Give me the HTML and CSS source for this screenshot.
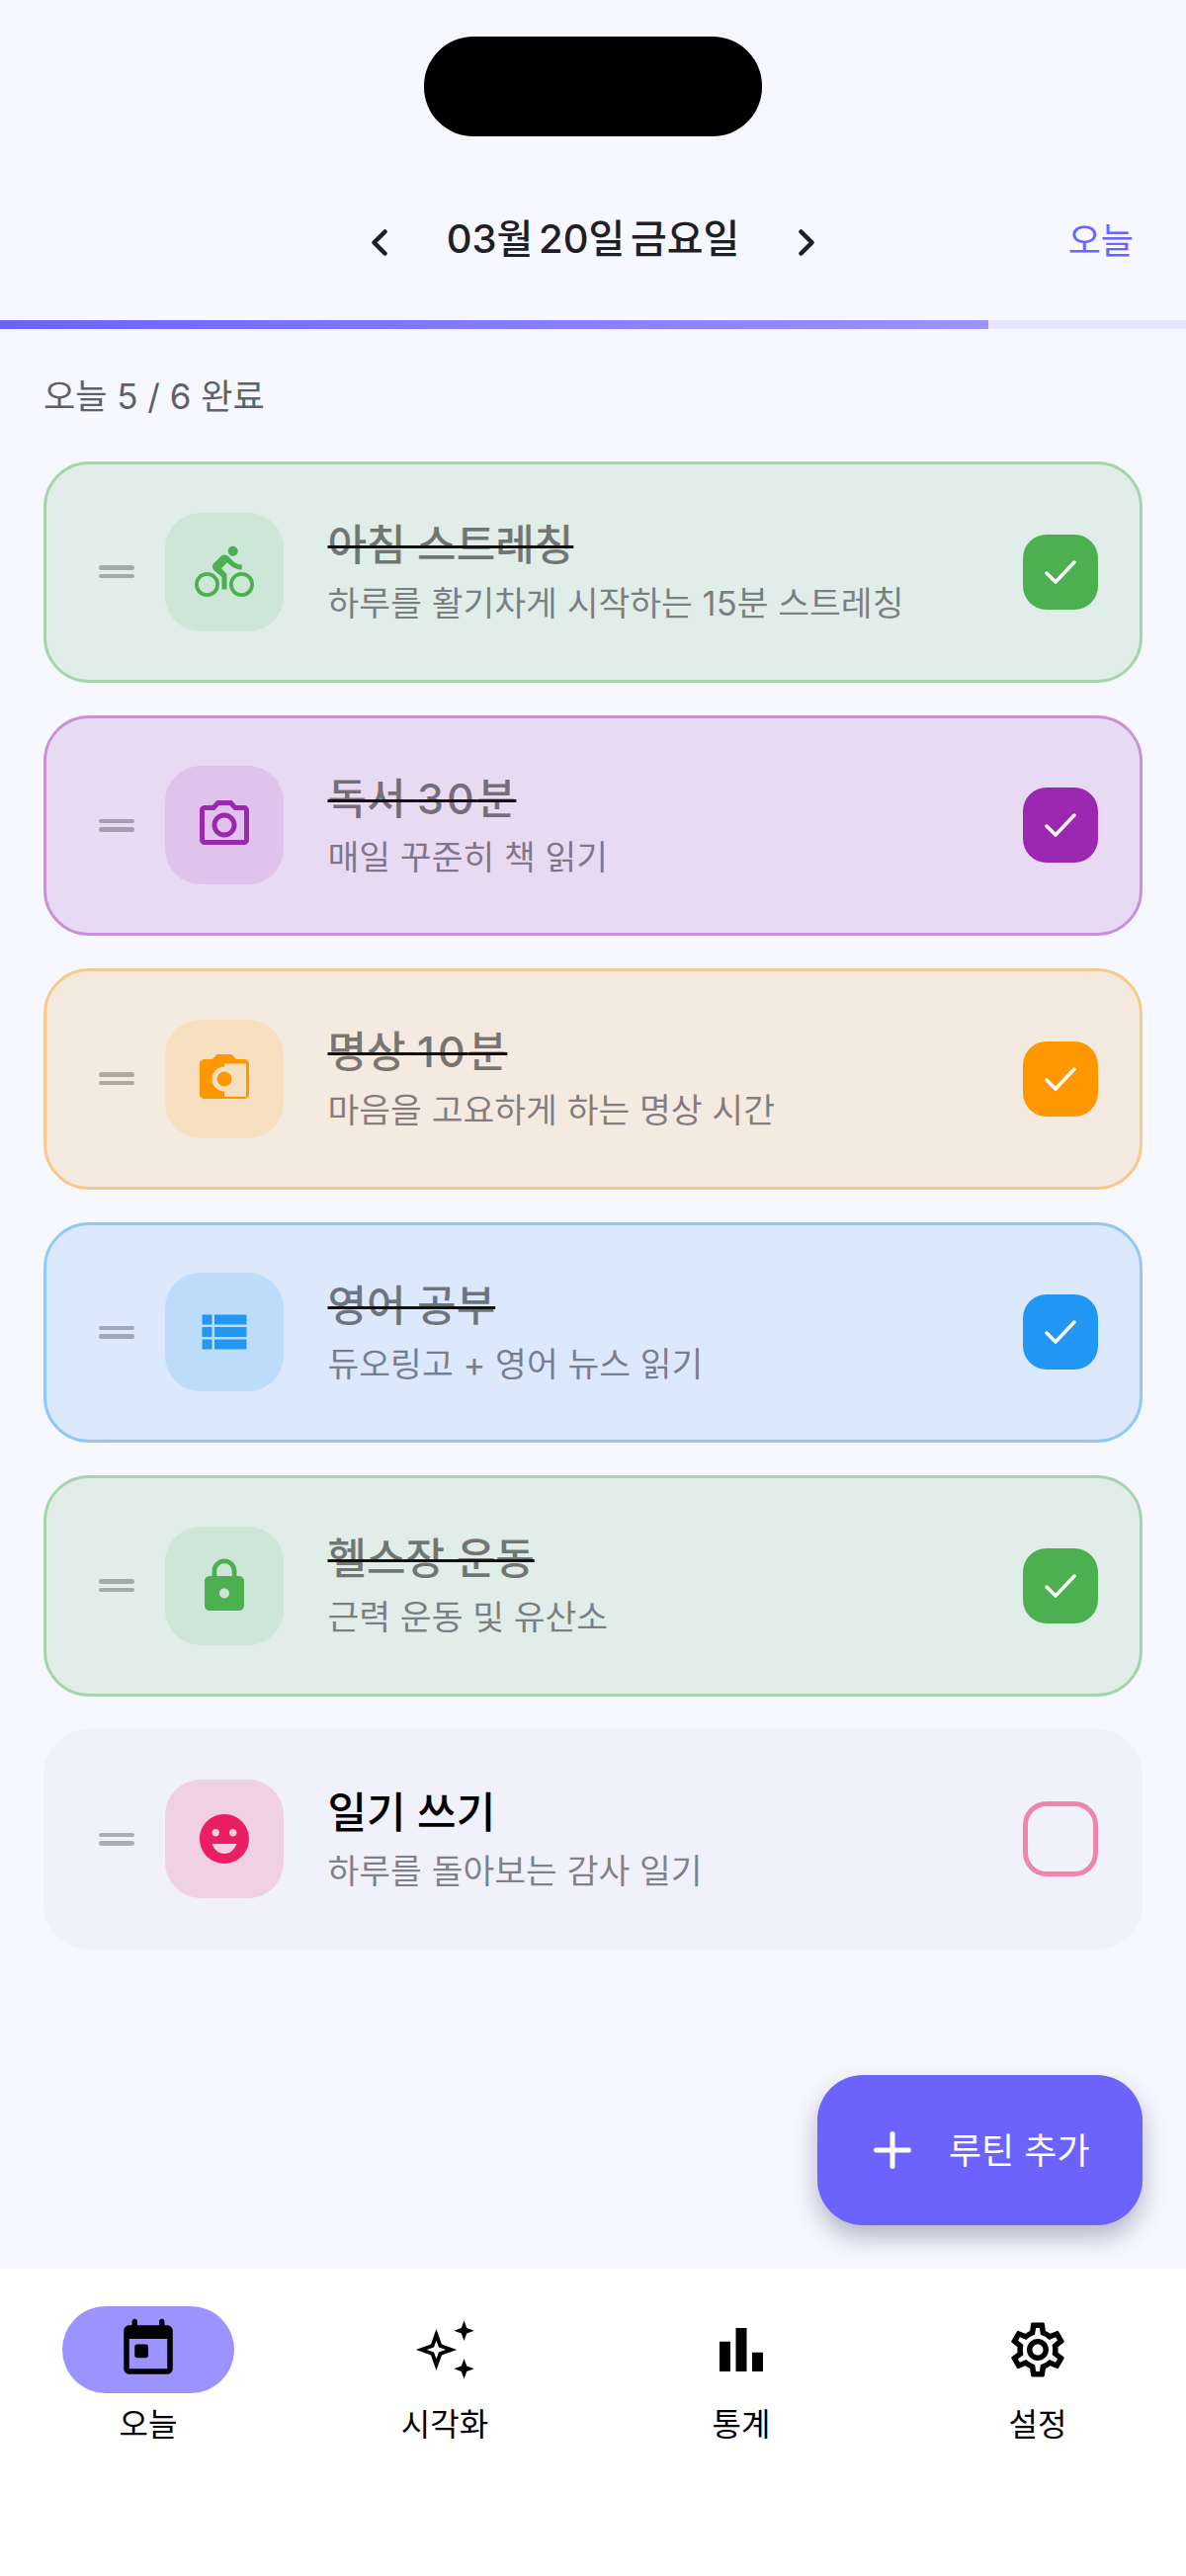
FILE: index.html
```html
<!DOCTYPE html>
<html lang="ko">
<head>
    <meta charset="UTF-8">
    <meta name="viewport" content="width=device-width, initial-scale=1.0">
    <title>오늘 루틴</title>
    <link rel="stylesheet" href="styles.css">
</head>
<body>
    <div class="screen">
        <div class="notch-area"><div class="notch"></div></div>

        <header class="header">
            <div class="date-nav">
                <svg class="chevron" viewBox="0 0 16 27"><path d="M13.5 2.5l-11 11 11 11"/></svg>
                <span class="date">03월 20일 금요일</span>
                <svg class="chevron" viewBox="0 0 16 27"><path d="M2.5 2.5l11 11-11 11"/></svg>
            </div>
            <span class="today-link">오늘</span>
        </header>

        <div class="progress"><div class="progress-fill"></div></div>

        <main class="content">
            <p class="count">오늘 5 / 6 완료</p>

            <div class="card card-green done">
                <div class="handle"><i></i><i></i></div>
                <div class="icon-box">
                    <svg class="icon" viewBox="0 0 24 24"><path d="M15.5 5.5c1.1 0 2-.9 2-2s-.9-2-2-2-2 .9-2 2 .9 2 2 2zM5 12c-2.8 0-5 2.2-5 5s2.2 5 5 5 5-2.2 5-5-2.2-5-5-5zm0 8.5c-1.9 0-3.5-1.6-3.5-3.5s1.6-3.5 3.5-3.5 3.5 1.6 3.5 3.5-1.6 3.5-3.5 3.5zm5.8-10l2.4-2.4.8.8c1.3 1.3 3 2.1 5.1 2.1V9c-1.5 0-2.7-.6-3.6-1.5l-1.9-1.9c-.5-.4-1-.6-1.6-.6s-1.1.2-1.4.6L7.8 8.4c-.4.4-.6.9-.6 1.4 0 .6.2 1.1.6 1.4L11 14v5h2v-6.2l-2.2-2.3zM19 12c-2.8 0-5 2.2-5 5s2.2 5 5 5 5-2.2 5-5-2.2-5-5-5zm0 8.5c-1.9 0-3.5-1.6-3.5-3.5s1.6-3.5 3.5-3.5 3.5 1.6 3.5 3.5-1.6 3.5-3.5 3.5z"/></svg>
                </div>
                <div class="card-text">
                    <div class="card-title">아침 스트레칭</div>
                    <div class="card-sub">하루를 활기차게 시작하는 15분 스트레칭</div>
                </div>
                <div class="check"><svg viewBox="0 0 32 24"><path d="M2 13l9 9L30 2"/></svg></div>
            </div>

            <div class="card card-purple done">
                <div class="handle"><i></i><i></i></div>
                <div class="icon-box">
                    <svg class="icon" viewBox="0 0 24 24"><path d="M14.12 4l1.83 2H20v12H4V6h4.05l1.83-2h4.24M15 2H9L7.17 4H4c-1.1 0-2 .9-2 2v12c0 1.1.9 2 2 2h16c1.1 0 2-.9 2-2V6c0-1.1-.9-2-2-2h-3.17L15 2zm-3 7c1.65 0 3 1.35 3 3s-1.35 3-3 3-3-1.35-3-3 1.35-3 3-3m0-2c-2.76 0-5 2.24-5 5s2.24 5 5 5 5-2.24 5-5-2.24-5-5-5z"/></svg>
                </div>
                <div class="card-text">
                    <div class="card-title">독서 <span class="num">30</span>분</div>
                    <div class="card-sub">매일 꾸준히 책 읽기</div>
                </div>
                <div class="check"><svg viewBox="0 0 32 24"><path d="M2 13l9 9L30 2"/></svg></div>
            </div>

            <div class="card card-orange done">
                <div class="handle"><i></i><i></i></div>
                <div class="icon-box">
                    <svg class="icon" viewBox="0 0 24 24"><path d="M20 4h-3.17L15 2H9L7.17 4H4c-1.1 0-2 .9-2 2v12c0 1.1.9 2 2 2h16c1.1 0 2-.9 2-2V6c0-1.1-.9-2-2-2z"/><path class="icon-cut" d="M12 5.8H20.8V19.1H12V15A3 3 0 0 0 12 9ZM12 7A5 5 0 0 0 12 17V15A3 3 0 0 1 12 9Z"/></svg>
                </div>
                <div class="card-text">
                    <div class="card-title">명상 <span class="num">10</span>분</div>
                    <div class="card-sub">마음을 고요하게 하는 명상 시간</div>
                </div>
                <div class="check"><svg viewBox="0 0 32 24"><path d="M2 13l9 9L30 2"/></svg></div>
            </div>

            <div class="card card-blue done">
                <div class="handle"><i></i><i></i></div>
                <div class="icon-box">
                    <svg class="icon" viewBox="0 0 24 24"><path d="M3 14h4v-4H3v4zm0 5h4v-4H3v4zM3 9h4V5H3v4zm5 5h13v-4H8v4zm0 5h13v-4H8v4zM8 5v4h13V5H8z"/></svg>
                </div>
                <div class="card-text">
                    <div class="card-title">영어 공부</div>
                    <div class="card-sub">듀오링고 + 영어 뉴스 읽기</div>
                </div>
                <div class="check"><svg viewBox="0 0 32 24"><path d="M2 13l9 9L30 2"/></svg></div>
            </div>

            <div class="card card-green done">
                <div class="handle"><i></i><i></i></div>
                <div class="icon-box">
                    <svg class="icon" viewBox="0 0 24 24"><path d="M18 8h-1V6c0-2.76-2.24-5-5-5S7 3.24 7 6v2H6c-1.1 0-2 .9-2 2v10c0 1.1.9 2 2 2h12c1.1 0 2-.9 2-2V10c0-1.1-.9-2-2-2zm-6 9c-1.1 0-2-.9-2-2s.9-2 2-2 2 .9 2 2-.9 2-2 2zm3.1-9H8.9V6c0-1.71 1.39-3.1 3.1-3.1 1.71 0 3.1 1.39 3.1 3.1v2z"/></svg>
                </div>
                <div class="card-text">
                    <div class="card-title">헬스장 운동</div>
                    <div class="card-sub">근력 운동 및 유산소</div>
                </div>
                <div class="check"><svg viewBox="0 0 32 24"><path d="M2 13l9 9L30 2"/></svg></div>
            </div>

            <div class="card card-pink">
                <div class="handle"><i></i><i></i></div>
                <div class="icon-box">
                    <svg class="icon" viewBox="0 0 24 24"><path d="M11.99 2C6.47 2 2 6.48 2 12s4.47 10 9.99 10C17.52 22 22 17.52 22 12S17.52 2 11.99 2zM8.5 8c.83 0 1.5.67 1.5 1.5S9.33 11 8.5 11 7 10.33 7 9.5 7.67 8 8.5 8zM12 18c-2.28 0-4.22-1.66-5-4h10c-.78 2.34-2.72 4-5 4zm3.5-7c-.83 0-1.5-.67-1.5-1.5S14.67 8 15.5 8s1.5.67 1.5 1.5-.67 1.5-1.5 1.5z"/></svg>
                </div>
                <div class="card-text">
                    <div class="card-title">일기 쓰기</div>
                    <div class="card-sub">하루를 돌아보는 감사 일기</div>
                </div>
                <div class="check"></div>
            </div>

            <button class="fab">
                <svg viewBox="0 0 38 38"><path d="M19 2.5v33M2.5 19h33"/></svg>
                <span>루틴 추가</span>
            </button>
        </main>

        <nav class="tabbar">
            <div class="tab active">
                <div class="tab-icon">
                    <svg viewBox="0 0 24 24"><path d="M19 3h-1V1.6c0-.55-.45-1-1-1s-1 .45-1 1V3H8V1.6c0-.55-.45-1-1-1s-1 .45-1 1V3H5c-1.1 0-2 .9-2 2v14c0 1.1.9 2 2 2h14c1.1 0 2-.9 2-2V5c0-1.1-.9-2-2-2zm0 16H5V8h14v11z"/><rect x="7" y="10" width="5" height="5" rx="1"/></svg>
                </div>
                <span>오늘</span>
            </div>
            <div class="tab">
                <div class="tab-icon">
                    <svg viewBox="0 0 24 24"><path fill-rule="evenodd" d="M8.9 4.4 10.9 10 16.4 12 10.9 14 8.9 19.6 6.9 14 1.4 12 6.9 10ZM8.9 8.6 8 11.1 5.4 12 8 12.9 8.9 15.4 9.8 12.9 12.4 12 9.8 11.1Z"/><path d="M19.1 1.3 20.1 4 22.8 5 20.1 6 19.1 8.7 18.1 6 15.4 5 18.1 4ZM19.1 15.3 20.1 18 22.8 19 20.1 20 19.1 22.7 18.1 20 15.4 19 18.1 18Z"/></svg>
                </div>
                <span>시각화</span>
            </div>
            <div class="tab">
                <div class="tab-icon">
                    <svg viewBox="0 0 24 24"><rect x="4" y="9" width="4" height="11"/><rect x="10" y="4" width="4" height="16"/><rect x="16" y="13" width="4" height="7"/></svg>
                </div>
                <span>통계</span>
            </div>
            <div class="tab">
                <div class="tab-icon">
                    <svg viewBox="0 0 24 24"><path d="M19.43 12.98c.04-.32.07-.64.07-.98 0-.34-.03-.66-.07-.98l2.11-1.65c.19-.15.24-.42.12-.64l-2-3.46c-.09-.16-.26-.25-.44-.25-.06 0-.12.01-.17.03l-2.49 1c-.52-.4-1.08-.73-1.69-.98l-.38-2.65C14.46 2.18 14.25 2 14 2h-4c-.25 0-.46.18-.49.42l-.38 2.65c-.61.25-1.17.59-1.69.98l-2.49-1c-.06-.02-.12-.03-.18-.03-.17 0-.34.09-.43.25l-2 3.46c-.13.22-.07.49.12.64l2.11 1.65c-.04.32-.07.65-.07.98 0 .33.03.66.07.98l-2.11 1.65c-.19.15-.24.42-.12.64l2 3.46c.09.16.26.25.44.25.06 0 .12-.01.17-.03l2.49-1c.52.4 1.08.73 1.69.98l.38 2.65c.03.24.24.42.49.42h4c.25 0 .46-.18.49-.42l.38-2.65c.61-.25 1.17-.59 1.69-.98l2.49 1c.06.02.12.03.18.03.17 0 .34-.09.43-.25l2-3.46c.12-.22.07-.49-.12-.64l-2.11-1.65zm-1.98-1.71c.04.31.05.52.05.73 0 .21-.02.43-.05.73l-.14 1.13.89.7 1.08.84-.7 1.21-1.27-.51-1.04-.42-.9.68c-.43.32-.84.56-1.25.73l-1.06.43-.16 1.13-.2 1.35h-1.4l-.19-1.35-.16-1.13-1.06-.43c-.43-.18-.83-.41-1.23-.71l-.91-.7-1.06.43-1.27.51-.7-1.21 1.08-.84.89-.7-.14-1.13c-.03-.31-.05-.54-.05-.74s.02-.43.05-.73l.14-1.13-.89-.7-1.08-.84.7-1.21 1.27.51 1.04.42.9-.68c.43-.32.84-.56 1.25-.73l1.06-.43.16-1.13.2-1.35h1.39l.19 1.35.16 1.13 1.06.43c.43.18.83.41 1.23.71l.91.7 1.06-.43 1.27-.51.7 1.21-1.07.85-.89.7.14 1.13zM12 8c-2.21 0-4 1.79-4 4s1.79 4 4 4 4-1.79 4-4-1.79-4-4-4zm0 6c-1.1 0-2-.9-2-2s.9-2 2-2 2 .9 2 2-.9 2-2 2z"/></svg>
                </div>
                <span>설정</span>
            </div>
        </nav>
    </div>
</body>
</html>
```

FILE: styles.css
```css
* {
    box-sizing: border-box;
}

body {
    margin: 0;
    font-family: Inter, "Noto Sans CJK KR", sans-serif;
    background: #f6f7ff;
}

.screen {
    width: 1200px;
    height: 2607px;
    display: flex;
    flex-direction: column;
    overflow: hidden;
}

/* top */
.notch-area {
    height: 138px;
    padding-top: 37px;
    display: flex;
    justify-content: center;
}

.notch {
    width: 342px;
    height: 101px;
    background: #000;
    border-radius: 50px;
}

.header {
    height: 186px;
    padding: 20px 53px 0 0;
    display: flex;
    align-items: center;
    justify-content: flex-end;
    position: relative;
}

.date-nav {
    position: absolute;
    left: 0;
    right: 0;
    top: 28px;
    bottom: 0;
    display: flex;
    align-items: center;
    justify-content: center;
    gap: 60px;
}

.chevron {
    width: 16px;
    height: 27px;
    fill: none;
    stroke: #1f2024;
    stroke-width: 4.5;
    stroke-linecap: round;
    stroke-linejoin: round;
}

.date {
    font-size: 40px;
    line-height: 50px;
    font-weight: 500;
    color: #1f2024;
    word-spacing: -5px;
    transform: translateY(-3px);
}

.today-link {
    position: relative;
    font-size: 36px;
    color: #6c63ff;
}

.progress {
    height: 9px;
    background: #e6e5fb;
}

.progress-fill {
    width: 1000px;
    height: 100%;
    background: linear-gradient(90deg, #6c63ff, #9b93ff);
}

/* list */
.content {
    flex: 1;
    padding: 0 44px;
    position: relative;
}

.count {
    margin: 0;
    height: 134px;
    padding-top: 46px;
    font-size: 35px;
    line-height: 44px;
    color: #5f6068;
}

.card {
    height: 223.5px;
    margin-bottom: 33px;
    padding: 0 43px 0 52.5px;
    display: flex;
    align-items: center;
    border: 3px solid transparent;
    border-radius: 46px;
}

.card-green { background: #e0ede8; border-color: #a6d5aa; --accent: #4caf50; --box: #cde6d8; }
.card-purple { background: #e9daf4; border-color: #c892da; --accent: #9c27b0; --box: #dfc3ea; }
.card-orange { background: #f5eadf; border-color: #f7c98a; --accent: #ff9800; --box: #f6e0c0; }
.card-blue { background: #dce9fd; border-color: #90c9f8; --accent: #2196f3; --box: #bddcfa; }
.card-pink { background: #f0f1fb; border-color: #f0f1fb; --accent: #e91e63; --box: #f0d1e3; }

.handle {
    width: 36px;
    display: flex;
    flex-direction: column;
    gap: 4px;
    margin-right: 31.5px;
}

.handle i {
    height: 4.5px;
    border-radius: 3px;
    background: rgba(0, 0, 0, 0.28);
}

.icon-box {
    width: 120px;
    height: 120px;
    margin-right: 44.5px;
    flex-shrink: 0;
    display: flex;
    align-items: center;
    justify-content: center;
    background: var(--box);
    border-radius: 36px;
}

.icon {
    width: 60px;
    height: 60px;
    fill: var(--accent);
}

.icon-cut {
    fill: var(--box);
}

.card-text {
    flex: 1;
    padding-bottom: 2px;
}

.card-title {
    font-size: 43px;
    line-height: 58px;
    font-weight: 500;
    color: #000;
}

.num {
    letter-spacing: 3px;
}

.done .card-title {
    color: rgba(0, 0, 0, 0.5);
    text-decoration: line-through;
    text-decoration-color: #111;
    text-decoration-thickness: 3px;
}

.card-sub {
    margin-top: 7px;
    font-size: 34.6px;
    line-height: 46px;
    color: rgba(30, 32, 44, 0.55);
}

.check {
    width: 76px;
    height: 76px;
    flex-shrink: 0;
    display: flex;
    align-items: center;
    justify-content: center;
    border: 5px solid #ee86a9;
    border-radius: 24px;
    position: relative;
    left: 0.5px;
}

.done .check {
    background: var(--accent);
    border: none;
}

.check svg {
    width: 32px;
    height: 24px;
    fill: none;
    stroke: #fff;
    stroke-width: 3.5;
    stroke-linecap: round;
    stroke-linejoin: round;
}

.fab {
    position: absolute;
    right: 44px;
    bottom: 44px;
    width: 329px;
    height: 152px;
    display: flex;
    align-items: center;
    gap: 38px;
    padding: 0 0 0 57px;
    border: none;
    border-radius: 46px;
    background: #6c63ff;
    color: #fff;
    font-family: inherit;
    font-size: 36px;
    box-shadow: 0 12px 24px rgba(30, 30, 70, 0.3);
}

.fab span {
    margin-bottom: 5px;
}

.fab svg {
    width: 38px;
    height: 38px;
    fill: none;
    stroke: #fff;
    stroke-width: 5;
    stroke-linecap: round;
}

/* bottom nav */
.tabbar {
    height: 311px;
    padding-top: 38px;
    display: grid;
    grid-template-columns: repeat(4, 1fr);
    background: #fff;
}

.tab {
    display: flex;
    flex-direction: column;
    align-items: center;
    font-size: 32px;
    line-height: 40px;
    color: #000;
}

.tab-icon {
    width: 174px;
    height: 88px;
    margin-bottom: 12px;
    display: flex;
    align-items: center;
    justify-content: center;
    border-radius: 44px;
}

.tab.active .tab-icon {
    background: #9b93ff;
}

.tab-icon svg {
    width: 66px;
    height: 66px;
    fill: #000;
}
```
